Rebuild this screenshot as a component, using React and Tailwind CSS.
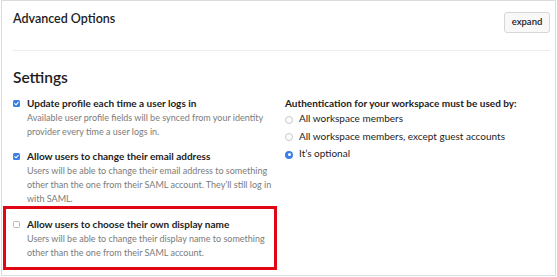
import React from "react";

function Check({ checked }) {
  return checked ? (
    <span className="mt-[3.5px] flex h-[7px] w-[7px] shrink-0 items-center justify-center rounded-[1.5px] bg-[#3b7ee8]">
      <svg viewBox="0 0 8 8" className="h-[7px] w-[7px]">
        <path d="M2 4.2 L3.4 5.5 L6 2.6" fill="none" stroke="white" strokeWidth="1.2" strokeLinecap="round" strokeLinejoin="round" />
      </svg>
    </span>
  ) : (
    <span className="mt-[3.5px] h-[7px] w-[7px] shrink-0 rounded-[1.5px] border border-[#b9b9b9] bg-white" />
  );
}

function Option({ checked, label, children }) {
  return (
    <div className="flex gap-[7px]">
      <Check checked={checked} />
      <div className="w-[245px]">
        <div className="text-[10px] font-bold leading-[14px] text-[#1d1c1d]">{label}</div>
        <div className="mt-px text-[9px] leading-[14px] text-[#7b7b7b]">{children}</div>
      </div>
    </div>
  );
}

function Radio({ checked, label }) {
  return (
    <div className="flex h-[17.5px] items-start gap-[6px]">
      {checked ? (
        <span className="mt-[5.5px] flex h-[8px] w-[8px] shrink-0 items-center justify-center rounded-full bg-[#3b7ee8]">
          <span className="h-[3px] w-[3px] rounded-full bg-white" />
        </span>
      ) : (
        <span className="mt-[5.5px] h-[8px] w-[8px] shrink-0 rounded-full border border-[#c8c8c8] bg-white" />
      )}
      <span className="text-[10px] leading-[17.5px] text-[#1d1c1d]">{label}</span>
    </div>
  );
}

export default function App() {
  return (
    <div className="h-[277px] w-[557px] overflow-hidden bg-white font-['Lato',sans-serif]">
      <div className="ml-px flex h-[276px] w-[555px] flex-col border border-[#dcdcdc]">
        <div className="flex h-[49px] justify-between pl-[11px] pr-[5px]">
          <div className="pt-[8.5px] text-[12.5px] font-semibold leading-[18px] text-[#1d1c1d]">Advanced Options</div>
          <button className="mt-[11px] h-[21px] w-[46px] rounded-[3px] border border-[#d6d6d6] bg-[#f8f8f8] text-[9.5px] font-semibold text-[#1d1c1d]">
            expand
          </button>
        </div>
        <div className="ml-[11px] mr-[5px] h-px bg-[#ececec]" />
        <div className="mt-[15.5px] pl-[11px] text-[15.5px] font-semibold leading-[20px] text-[#1d1c1d]">Settings</div>
        <div className="mt-[9.5px] flex">
          <div className="ml-px flex w-[274px] flex-col">
            <div className="pl-[10px]">
              <Option checked label="Update profile each time a user logs in">
                Available user profile fields will be synced from your identity provider every time a user logs in.
              </Option>
            </div>
            <div className="mt-[10px] pl-[10px]">
              <Option checked label="Allow users to change their email address">
                Users will be able to change their email address to something other than the one from their SAML account. They’ll still log in with SAML.
              </Option>
            </div>
            <div className="border-[3px] border-[#e10613] pb-[7px] pl-[7px] pt-[8px]">
              <Option label="Allow users to choose their own display name">
                Users will be able to change their display name to something other than the one from their SAML account.
              </Option>
            </div>
          </div>
          <div className="ml-[8px] flex flex-col">
            <div className="text-[10px] font-bold leading-[14px] text-[#1d1c1d]">
              Authentication for your workspace must be used by:
            </div>
            <Radio label="All workspace members" />
            <Radio label="All workspace members, except guest accounts" />
            <Radio checked label="It’s optional" />
          </div>
        </div>
      </div>
    </div>
  );
}
